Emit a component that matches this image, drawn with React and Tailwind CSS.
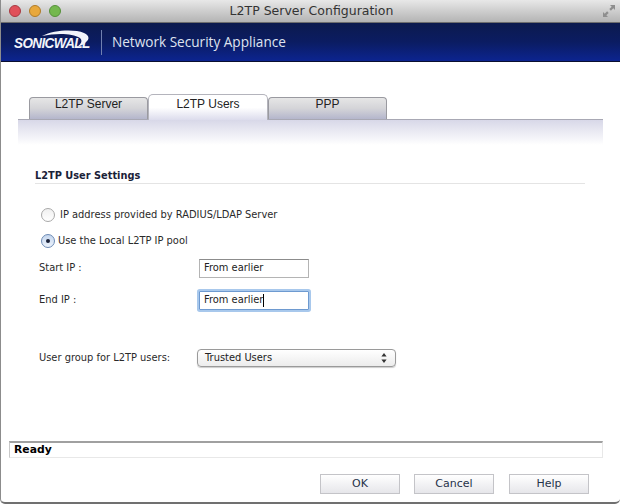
const lucida = "font-['DejaVu_Sans',sans-serif]";

function Traffic({ color, edge }) {
  return (
    <span
      className={`w-[12px] h-[12px] rounded-full border ${color} ${edge}`}
    />
  );
}

function Tab({ label, active, w }) {
  return (
    <div
      className={
        active
          ? `${w} h-[26px] -mb-px z-10 rounded-t-[5px] border border-b-0 border-[#b4b4bc] bg-gradient-to-b from-white via-white to-[#dcdcec] flex items-start justify-center pt-[3px] text-[12px] leading-[12px] text-[#222] font-['Liberation_Sans',sans-serif]`
          : `${w} h-[22px] mt-[3px] rounded-t-[4px] border border-b-0 border-[#9a9aa0] bg-gradient-to-b from-[#e6e6e6] via-[#d4d4d8] to-[#b4b6cc] flex items-start justify-center text-[12px] leading-[12px] text-[#222] font-['Liberation_Sans',sans-serif]`
      }
    >
      {label}
    </div>
  );
}

function Btn({ label, w }) {
  return (
    <div
      className={`${w} h-[20px] border border-[#c4c4c8] bg-gradient-to-b from-white to-[#e6e6ea] flex items-center justify-center text-[11px] text-[#26324a]`}
    >
      {label}
    </div>
  );
}

export default function App() {
  return (
    <div className={`w-[620px] h-[504px] bg-white overflow-hidden flex flex-col border-l border-[#8c8c8c] border-b-2 border-b-[#707070] rounded-b-[5px] ${lucida}`}>
      <div className="h-[23px] shrink-0 bg-gradient-to-b from-[#e8e8e8] to-[#b4b4b4] border-b border-[#6e6e6e] flex items-center relative">
        <div className="flex gap-[8px] ml-[8px]">
          <Traffic color="bg-[#e0505a]" edge="border-[#a83a42]" />
          <Traffic color="bg-[#e8a83c]" edge="border-[#b07c28]" />
          <Traffic color="bg-[#74b84e]" edge="border-[#56913a]" />
        </div>
        <div className="flex-1 text-center text-[12.5px] text-[#333] -ml-[58px]">L2TP Server Configuration</div>
        <svg className="absolute right-[4px] top-[4px]" width="14" height="14" viewBox="0 0 14 14">
          <path d="M8 1h5v5l-1.7-1.7-2.4 2.4-1.6-1.6 2.4-2.4z" fill="#8e8e8e" />
          <path d="M6 13H1V8l1.7 1.7 2.4-2.4 1.6 1.6-2.4 2.4z" fill="#8e8e8e" />
        </svg>
      </div>

      <div className="h-[39px] shrink-0 bg-gradient-to-b from-[#0c1a4e] via-[#0b1c62] to-[#0c2490] border-b border-[#0a0f30] flex items-center">
        <div className="relative ml-[13px] w-[76px] h-[24px] flex items-end">
          <svg className="absolute left-[28px] top-0" width="48" height="18" viewBox="0 0 48 18">
            <path d="M0 6C12 0 32-1 42 3c5 2 6 6 2 9-2 2-5 4-9 5 4-3 6-6 3-9C30 3 14 3 0 6z" fill="#f2f4fa" />
          </svg>
          <span className="relative text-[13.5px] leading-[16px] mb-[2px] font-bold italic text-[#f2f4fa] tracking-[-0.6px] font-['Liberation_Sans',sans-serif] scale-y-[1.1]">SONICWALL</span>
        </div>
        <div className="w-px h-[25px] bg-[#7080b0] ml-[11px]" />
        <div className="ml-[10px] text-[13.6px] text-[#dfe3f0] font-['Open_Sans',sans-serif]">Network Security Appliance</div>
      </div>

      <div className="flex-1 flex flex-col">
        <div className="flex ml-[28px] mt-[32px] h-[25px] items-stretch z-10">
          <Tab label="L2TP Server" w="w-[119px]" />
          <Tab label="L2TP Users" active w="w-[120px]" />
          <Tab label="PPP" w="w-[119px]" />
        </div>
        <div className="ml-[17px] w-[585px] h-[26px] border-t border-[#a8a8b4] bg-gradient-to-b from-[#d8d8e8] to-white" />

        <div className="ml-[34px] w-[550px] mt-[24px] border-b border-[#e4e4e4] text-[9.8px] leading-[14px] font-bold text-[#1a2238]">
          L2TP User Settings
        </div>

        <div className="ml-[40px] mt-[23px] flex items-center gap-[5px] h-[16px] text-[9.9px] text-[#2a2a2a]">
          <span className="w-[14px] h-[14px] rounded-full border border-[#a8a8a8] bg-gradient-to-b from-[#f0f0f0] to-white" />
          <span>IP address provided by RADIUS/LDAP Server</span>
        </div>
        <div className="ml-[40px] mt-[10px] flex items-center gap-[3px] h-[16px] text-[9.9px] text-[#2a2a2a]">
          <span className="w-[14px] h-[14px] rounded-full border border-[#6c8ab4] bg-gradient-to-b from-[#c4d6ee] to-[#eef4fc] flex items-center justify-center">
            <span className="w-[4px] h-[4px] rounded-full bg-[#1a2238]" />
          </span>
          <span>Use the Local L2TP IP pool</span>
        </div>

        <div className="ml-[38px] mt-[10px] flex items-center h-[19px] text-[9.9px] text-[#2a2a2a]">
          <span className="w-[160px]">Start IP :</span>
          <div className="w-[110px] h-[19px] border border-[#b4b4b4] border-t-[#8c8c8c] bg-white flex items-center pl-[4px] text-[#222]">From earlier</div>
        </div>
        <div className="ml-[38px] mt-[13px] flex items-center h-[19px] text-[9.9px] text-[#2a2a2a]">
          <span className="w-[160px]">End IP :</span>
          <div className="w-[110px] h-[19px] border border-[#6e9ad0] ring-2 ring-[#a8c8ec] rounded-[1px] bg-white flex items-center pl-[4px] text-[#222]">
            From earlier<span className="w-px h-[13px] bg-black" />
          </div>
        </div>

        <div className="ml-[38px] mt-[39px] flex items-center h-[18px] text-[9.9px] text-[#2a2a2a]">
          <span className="w-[158px]">User group for L2TP users:</span>
          <div className="w-[199px] h-[18px] rounded-[4px] border border-[#9a9a9a] bg-gradient-to-b from-white to-[#ececec] shadow-[0_1px_1px_rgba(0,0,0,0.2)] flex items-center justify-between pl-[7px] pr-[8px] text-[#222]">
            <span>Trusted Users</span>
            <svg width="6" height="10" viewBox="0 0 6 10">
              <path d="M3 0l2.6 3.6H.4zM3 10L.4 6.4h5.2z" fill="#333" />
            </svg>
          </div>
        </div>

        <div className="ml-[8px] w-[594px] mt-[74px] h-[17px] border-t-2 border-[#a0a0a0] border-r border-r-[#e8e8e8] border-b border-b-[#e8e8e8] border-l border-l-[#c8c8c8] flex items-center pl-[4px] text-[10.8px] font-bold text-black">
          Ready
        </div>

        <div className="ml-[319px] mt-[16px] flex">
          <Btn label="OK" w="w-[80px]" />
          <Btn label="Cancel" w="w-[80px] ml-[14px]" />
          <Btn label="Help" w="w-[80px] ml-[15px]" />
        </div>
      </div>
    </div>
  );
}
